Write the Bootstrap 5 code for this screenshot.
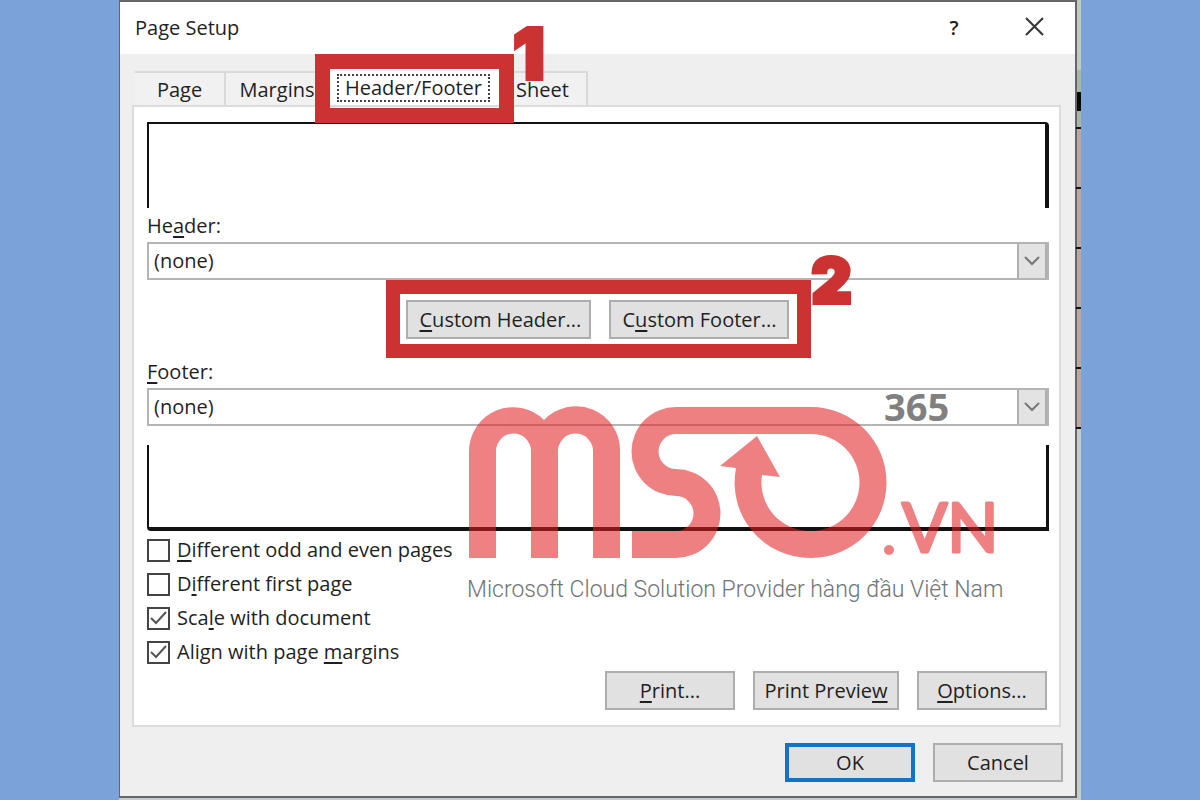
<!DOCTYPE html>
<html lang="en">
<head>
<meta charset="utf-8">
<meta name="viewport" content="width=device-width, initial-scale=1">
<title>Page Setup</title>
<link href="https://cdn.jsdelivr.net/npm/bootstrap@5.3.0/dist/css/bootstrap.min.css" rel="stylesheet">
<style>
  body { background: #7ba2d9; color: #1f1f1f; font: 20px/24px "Open Sans", "Noto Sans", sans-serif; }
  u { text-decoration-thickness: 2px; text-underline-offset: 3px; }
  .stage { min-height: 100vh; padding: 0 119px; }
  .sheet-edge { background: linear-gradient(#c3c8c8 0 70px, #a9b5ab 70px 92px, #080808 92px 111px, #a9b5ab 111px 127px, #b9a9a5 127px 428px, #c6cbd0 428px); padding: 0 4px 2px 0; }
  .edge-marks { width: 5px; top: 127px; height: 302px; background: repeating-linear-gradient(#111 0 2px, transparent 2px 60px); }
  .dialog { background: #efefef; border: solid #666; border-width: 2px 2px 2px 1px; }
  .titlebar { background: #fff; height: 52px; padding: 0 29px 0 15px; }
  .plain { background: none; border: 0; padding: 0; color: inherit; line-height: 24px; }
  .help { width: 20px; margin-right: 60px; font-weight: 600; }
  .tabs { padding: 15px 15px 0; }
  .tab { height: 34px; margin-top: 2px; border: solid #d9d9d9; border-width: 2px 2px 0 0; background: #f1f1f1; color: inherit; padding: 2px 0 0; }
  .tab-page { width: 91px; } .tab-margins { width: 104px; } .tab-sheet { width: 89px; }
  .tab-active { width: 169px; height: 36px; background: #fff; border: 0; padding: 5px 9px 4px 7px; z-index: 2; color: inherit; }
  .tab-active .focus-dots { border: 2px dotted #444; height: 28px; line-height: 24px; }
  .tab-active::after { content: ""; position: absolute; inset: -15px -15px -18px; border: 15px solid #cb3332; }
  .step { position: absolute; color: #cb3332; font: 900 70px/72px Inter, "Noto Sans", sans-serif; -webkit-text-stroke: 4px #cb3332; z-index: 3; pointer-events: none; }
  .step-one { left: 183px; top: -51px; }
  .step-two { left: 412px; top: -49px; font-size: 62px; }
  .panel { background: #fff; border: 2px solid #dcdcdc; margin: 0 14px 0 12px; padding: 15px 10px 15px 13px; }
  .preview { height: 86px; border: solid #111; border-width: 2px 4px 0 2px; }
  .preview-top { border-top-right-radius: 4px; }
  .preview-bottom { border-width: 0 3px 4px 2px; border-bottom-left-radius: 4px; margin-top: 19px; }
  .field-label { display: block; line-height: 24px; padding: 6px 0 4px; }
  .field-label-footer { padding-top: 2px; }
  .picker { height: 38px; border: 2px solid #b4b4b4; }
  .picker select { appearance: none; border: 0; background: #fff; color: inherit; width: 100%; height: 34px; padding: 0 36px 0 5px; }
  .picker span { position: absolute; right: 0; top: 0; width: 30px; height: 34px; background: #e3e3e3; border: 2px solid #b0b0b0; border-width: 0 2px 0 2px; pointer-events: none; }
  .push { height: 39px; padding: 0 12px; border: 2px solid #adadad; background: #e1e1e1; color: inherit; min-width: 130px; line-height: 24px; white-space: nowrap; }
  .push-default { border: 4px solid #1572c4; }
  .framed { border: 14px solid #cb3332; padding: 6px 8px 5px 6px; gap: 18px; }
  .framed .push { width: 185px; } .framed .push + .push { width: 180px; }
  .tick { appearance: none; width: 23px; height: 23px; border: 2px solid #444; background: #fff; margin: 0; flex: none; }
  .tick:checked { background: #fff url("data:image/svg+xml,%3Csvg xmlns='http://www.w3.org/2000/svg' viewBox='0 0 19 19'%3E%3Cpath d='M2 9l5 5L17 3' fill='none' stroke='%23555' stroke-width='2'/%3E%3C/svg%3E") center / 19px 19px; }
  .ticks { padding-top: 7px; gap: 10px; }
  .ticks label { gap: 7px; line-height: 24px; height: 24px; }
  .actions { gap: 18px; margin-top: 7px; padding-right: 2px; }
  .print-preview { width: 146px; padding: 0; }
  .closing { gap: 18px; padding: 16px 12px 14px; }
  .watermark { position: absolute; left: 320px; top: 259px; width: 600px; pointer-events: none; z-index: 2; }
</style>
</head>
<body>
<main class="stage">
  <div class="sheet-edge position-relative">
    <div class="edge-marks position-absolute end-0"></div>
    <section class="dialog" aria-label="Page Setup">
      <header class="titlebar d-flex align-items-center">
        <span class="me-auto">Page Setup</span>
        <button class="plain help" type="button">?</button>
        <button class="plain d-flex" type="button" aria-label="Close">
          <svg width="22" height="22" viewBox="0 0 22 22" fill="none" stroke="#333" stroke-width="2"><path d="M2 1l17 17M19 1L2 18"/></svg>
        </button>
      </header>
      <nav class="tabs d-flex align-items-start" role="tablist">
        <button class="tab tab-page" role="tab" type="button">Page</button>
        <button class="tab tab-margins" role="tab" type="button">Margins</button>
        <button class="tab-active position-relative" role="tab" type="button" aria-selected="true">
          <span class="focus-dots d-block">Header/Footer</span>
          <span class="step step-one">1</span>
        </button>
        <button class="tab tab-sheet" role="tab" type="button">Sheet</button>
      </nav>
      <div class="panel position-relative">
        <div class="preview preview-top"></div>
        <label class="field-label" for="header">He<u>a</u>der:</label>
        <div class="picker position-relative">
          <select id="header"><option>(none)</option></select>
          <span class="d-flex align-items-center justify-content-center"><svg width="16" height="10" viewBox="0 0 16 10" fill="none" stroke="#777" stroke-width="2"><path d="M1 1l7 7 7-7"/></svg></span>
        </div>
        <div class="d-flex justify-content-center">
          <div class="framed d-flex position-relative">
            <button class="push" type="button"><u>C</u>ustom Header...</button>
            <button class="push" type="button">C<u>u</u>stom Footer...</button>
            <span class="step step-two">2</span>
          </div>
        </div>
        <label class="field-label field-label-footer" for="footer"><u>F</u>ooter:</label>
        <div class="picker position-relative">
          <select id="footer"><option>(none)</option></select>
          <span class="d-flex align-items-center justify-content-center"><svg width="16" height="10" viewBox="0 0 16 10" fill="none" stroke="#777" stroke-width="2"><path d="M1 1l7 7 7-7"/></svg></span>
        </div>
        <div class="preview preview-bottom"></div>
        <div class="ticks d-flex flex-column align-items-start">
          <label class="d-flex align-items-center"><input class="tick" type="checkbox"><span><u>D</u>ifferent odd and even pages</span></label>
          <label class="d-flex align-items-center"><input class="tick" type="checkbox"><span>D<u>i</u>fferent first page</span></label>
          <label class="d-flex align-items-center"><input class="tick" type="checkbox" checked><span>Sca<u>l</u>e with document</span></label>
          <label class="d-flex align-items-center"><input class="tick" type="checkbox" checked><span>Align with page <u>m</u>argins</span></label>
        </div>
        <div class="actions d-flex justify-content-end">
          <button class="push" type="button"><u>P</u>rint...</button>
          <button class="push print-preview" type="button">Print Previe<u>w</u></button>
          <button class="push" type="button"><u>O</u>ptions...</button>
        </div>
        <svg class="watermark" viewBox="454 366 600 250" role="img" aria-label="MSO 365 .VN">
          <g opacity=".56" fill="#e41e22">
            <path d="M469 558V451A44 44 0 0 1 544 420A44 44 0 0 1 620 451V558H593V451A17.500 17.500 0 0 0 558 451V558H531V451A17.500 17.500 0 0 0 496 451V558Z"/>
            <path d="M811 407H676A44.500 44.500 0 0 0 676 496A17.500 17.500 0 0 1 676 531H632V558H676A44.500 44.500 0 0 0 676 469A17.500 17.500 0 0 1 676 434H811A48.500 48.500 0 0 1 811 531A48.500 48.500 0 0 1 762 475L780 477L757 436L720 466L736 468A75.500 75.500 0 0 0 811 558A75.500 75.500 0 0 0 811 407Z"/>
            <circle cx="889" cy="550" r="5"/>
            <text x="902" y="552" font-family="Lato, sans-serif" font-size="67" stroke="#e41e22" stroke-width="3" stroke-linejoin="round">VN</text>
          </g>
          <text x="884" y="421" fill="#808080" font-family="Noto Sans, sans-serif" font-weight="700" font-size="38">365</text>
          <text x="467" y="597" fill="#6e7478" font-family="Roboto, sans-serif" font-weight="300" font-size="23">Microsoft Cloud Solution Provider hàng đầu Việt Nam</text>
        </svg>
      </div>
      <footer class="closing d-flex justify-content-end">
        <button class="push push-default" type="button">OK</button>
        <button class="push" type="button">Cancel</button>
      </footer>
    </section>
  </div>
</main>
<script src="https://cdn.jsdelivr.net/npm/bootstrap@5.3.0/dist/js/bootstrap.bundle.min.js"></script>
</body>
</html>
